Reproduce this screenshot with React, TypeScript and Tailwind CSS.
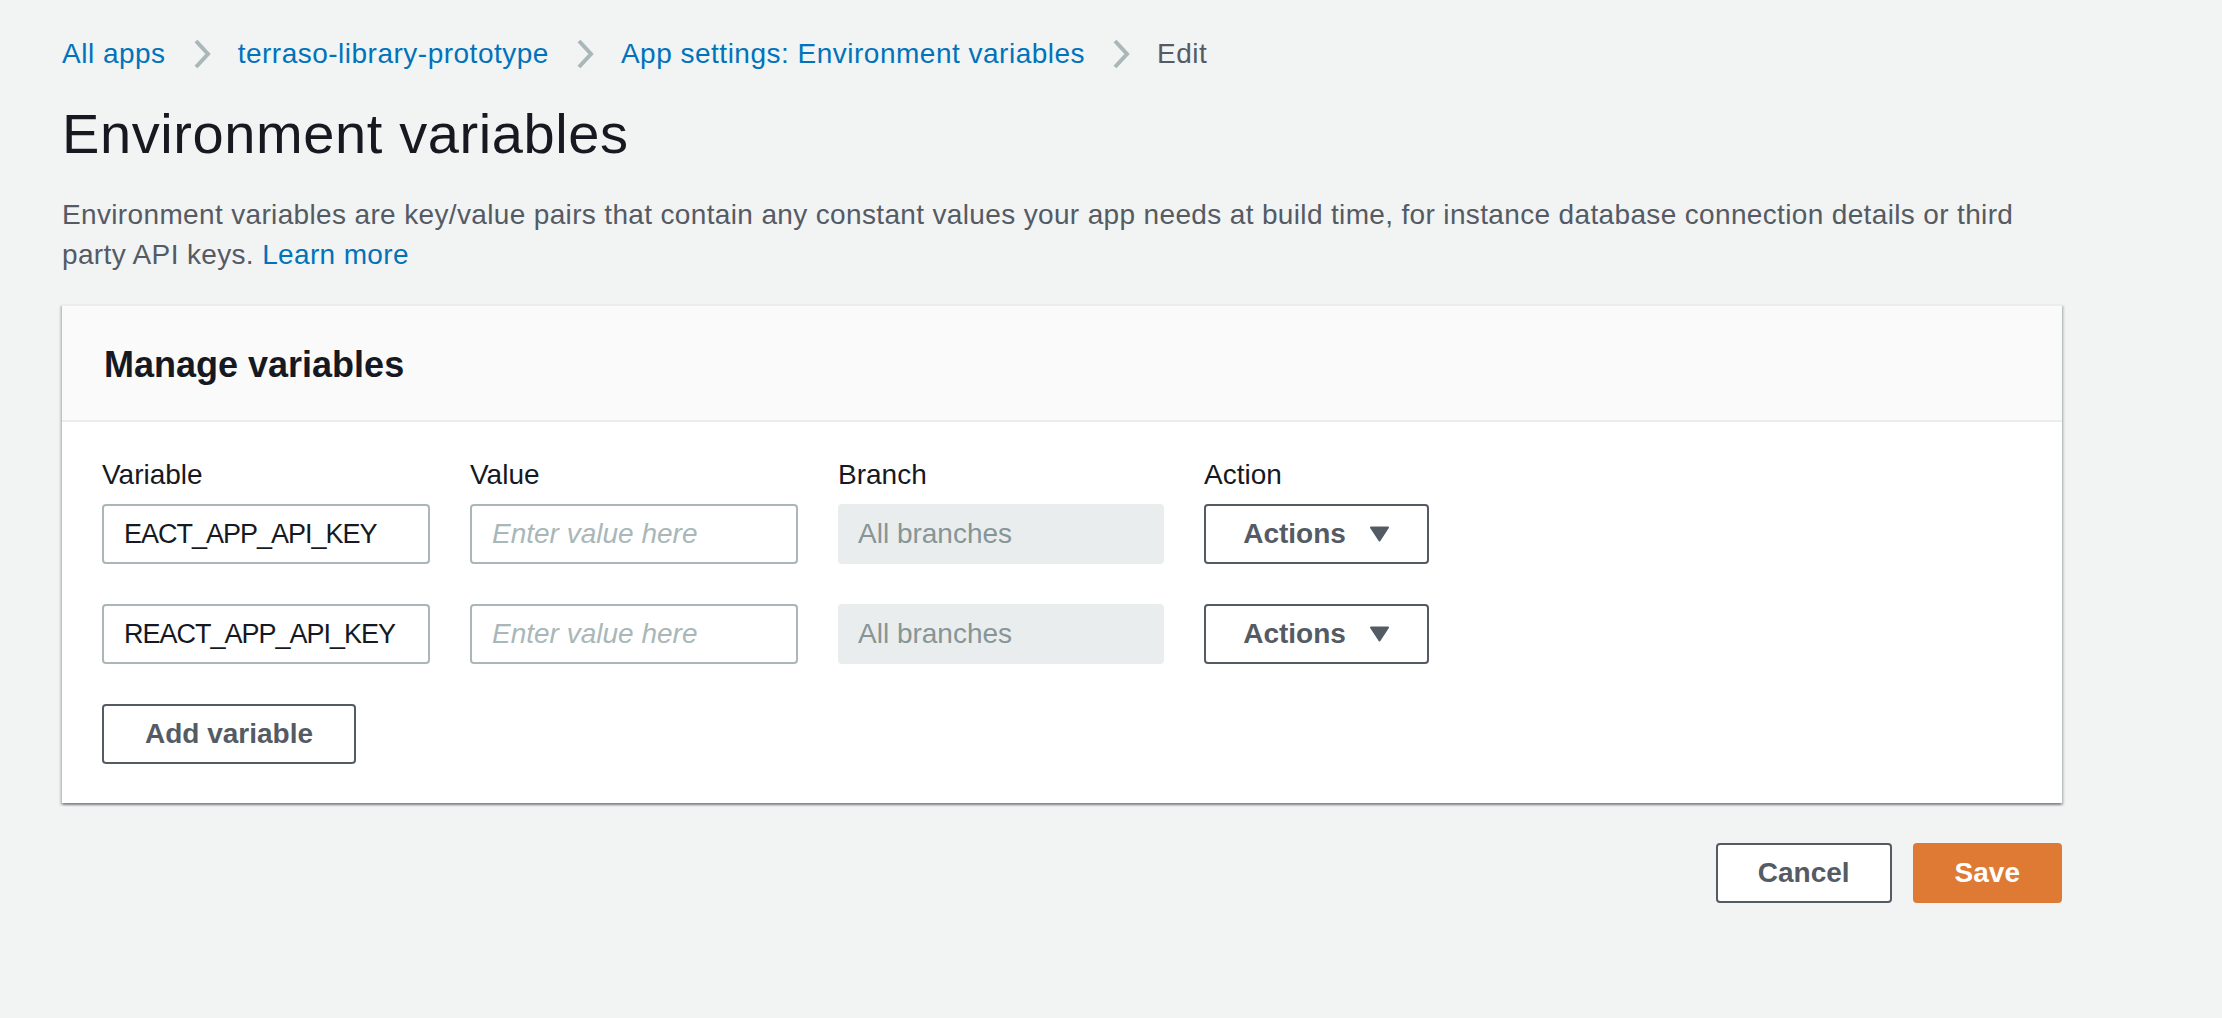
import React from 'react';

type Row = { name: string };

const rows: Row[] = [{ name: 'EACT_APP_API_KEY' }, { name: 'REACT_APP_API_KEY' }];

const crumbs = ['All apps', 'terraso-library-prototype', 'App settings: Environment variables'];

// Breadcrumb separator
const Chevron = () => (
  <svg width="18" height="30" viewBox="0 0 18 30" className="mx-[27px] shrink-0">
    <path d="M3 2 L15 15 L3 28" fill="none" stroke="#aab7b8" strokeWidth="4" />
  </svg>
);

const Caret = () => (
  <svg width="21" height="16" viewBox="0 0 21 16" className="shrink-0">
    <path d="M2 1.5 H19 L10.5 14.5 Z" fill="#545b64" stroke="#545b64" strokeWidth="2" strokeLinejoin="round" />
  </svg>
);

const App: React.FC = () => {
  return (
    <div className="min-h-screen bg-[#f2f3f3] font-['Liberation_Sans',Arial,sans-serif]">
      <div className="w-[2000px] ml-[62px] pt-[34px]">
        {/* Breadcrumbs */}
        <nav className="flex items-center h-[40px] text-[28px] leading-[40px] tracking-[0.5px]">
          {crumbs.map((c) => (
            <React.Fragment key={c}>
              <a className="text-[#0073bb] cursor-pointer">{c}</a>
              <Chevron />
            </React.Fragment>
          ))}
          <span className="text-[#545b64]">Edit</span>
        </nav>

        <h1 className="mt-[28px] text-[56px] leading-[64px] font-normal text-[#16191f] tracking-[0.6px]">
          Environment variables
        </h1>

        <p className="mt-[29px] text-[28px] leading-[40px] text-[#545b64] tracking-[0.35px]">
          Environment variables are key/value pairs that contain any constant values your app needs at build
          time, for instance database connection details or third party API keys.{' '}
          <a className="text-[#0073bb] cursor-pointer">Learn more</a>
        </p>

        {/* Manage variables card */}
        <div className="mt-[29px] bg-white border-t-2 border-[#eaeded] shadow-[0_2px_2px_0_rgba(0,28,36,0.3),2px_2px_2px_0_rgba(0,28,36,0.15),-2px_2px_2px_0_rgba(0,28,36,0.15)]">
          <div className="bg-[#fafafa] border-b-2 border-[#eaeded] px-[42px] pt-[35px] pb-[31px]">
            <h2 className="text-[36px] leading-[48px] font-bold text-[#16191f]">Manage variables</h2>
          </div>

          <div className="px-[40px] pt-[33px] pb-[39px]">
            <div className="flex gap-[40px] text-[28px] leading-[40px] text-[#16191f] mb-[9px]">
              <span className="w-[328px]">Variable</span>
              <span className="w-[328px]">Value</span>
              <span className="w-[326px]">Branch</span>
              <span className="w-[225px]">Action</span>
            </div>

            <div className="flex flex-col gap-[40px]">
              {rows.map((r) => (
                <div key={r.name} className="flex gap-[40px] items-center">
                  <input
                    readOnly
                    value={r.name}
                    className="w-[328px] h-[60px] px-[20px] rounded-[4px] border-2 border-[#aab7b8] bg-white text-[27px] tracking-[-1px] text-[#16191f] outline-none"
                  />
                  <input
                    placeholder="Enter value here"
                    className="w-[328px] h-[60px] px-[20px] rounded-[4px] border-2 border-[#aab7b8] bg-white text-[28px] text-[#16191f] outline-none placeholder:italic placeholder:text-[#aab7b8]"
                  />
                  <div className="w-[326px] h-[60px] px-[20px] rounded-[4px] bg-[#eaeded] flex items-center text-[28px] text-[#879596]">
                    All branches
                  </div>
                  <button
                    type="button"
                    className="w-[225px] h-[60px] rounded-[4px] border-2 border-[#545b64] bg-white flex items-center justify-center gap-[23px] text-[28px] font-bold text-[#545b64]"
                  >
                    Actions
                    <Caret />
                  </button>
                </div>
              ))}

              <div>
                <button
                  type="button"
                  className="h-[60px] px-[41px] rounded-[4px] border-2 border-[#545b64] bg-white text-[28px] font-bold text-[#545b64]"
                >
                  Add variable
                </button>
              </div>
            </div>
          </div>
        </div>

        {/* Footer actions */}
        <div className="mt-[40px] flex justify-end gap-[21px]">
          <button
            type="button"
            className="h-[60px] px-[40px] rounded-[4px] border-2 border-[#545b64] bg-white text-[28px] font-bold text-[#545b64]"
          >
            Cancel
          </button>
          <button
            type="button"
            className="h-[60px] px-[42px] rounded-[4px] bg-[#df7a35] text-[28px] font-bold text-white"
          >
            Save
          </button>
        </div>
      </div>
    </div>
  );
};

export default App;
